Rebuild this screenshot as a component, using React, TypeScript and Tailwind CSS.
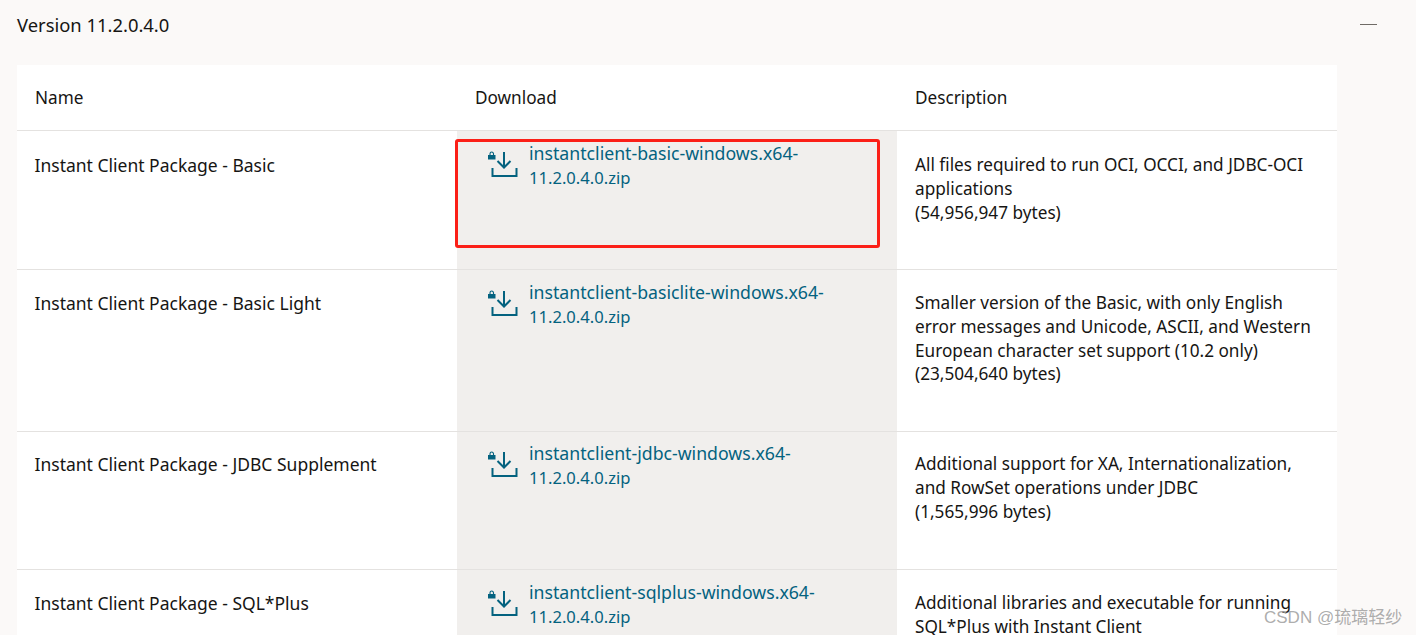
import React from 'react'

const rows = [
    {
        name: 'Instant Client Package - Basic',
        file: 'instantclient-basic-windows.x64-',
        height: 'h-[139px]',
        textPad: 'pt-[22px]',
        linkPad: 'pt-[11px]',
        desc: ['All files required to run OCI, OCCI, and JDBC-OCI', 'applications', '(54,956,947 bytes)'],
    },
    {
        name: 'Instant Client Package - Basic Light',
        file: 'instantclient-basiclite-windows.x64-',
        height: 'h-[162px]',
        textPad: 'pt-[21px]',
        linkPad: 'pt-[11px]',
        desc: ['Smaller version of the Basic, with only English', 'error messages and Unicode, ASCII, and Western', 'European character set support (10.2 only)', '(23,504,640 bytes)'],
    },
    {
        name: 'Instant Client Package - JDBC Supplement',
        file: 'instantclient-jdbc-windows.x64-',
        height: 'h-[138px]',
        textPad: 'pt-[20px]',
        linkPad: 'pt-[10px]',
        desc: ['Additional support for XA, Internationalization,', 'and RowSet operations under JDBC', '(1,565,996 bytes)'],
    },
    {
        name: 'Instant Client Package - SQL*Plus',
        file: 'instantclient-sqlplus-windows.x64-',
        height: 'h-[139px]',
        textPad: 'pt-[21px]',
        linkPad: 'pt-[11px]',
        desc: ['Additional libraries and executable for running', 'SQL*Plus with Instant Client'],
    },
]

const DownloadIcon = () => (
    <svg width="30" height="30" viewBox="0 0 30 30" fill="none" className="shrink-0">
        <path d="M0 6h7.5v4.5H0z" fill="#04627f" />
        <path d="M2 6V4.8a1.75 1.75 0 0 1 3.5 0V6" stroke="#04627f" strokeWidth="1.1" />
        <path d="M16 3v15M9.5 12l6.5 6.5 6.5-6.5" stroke="#04627f" strokeWidth="2" />
        <path d="M4.5 19v8h24v-8" stroke="#04627f" strokeWidth="2" />
    </svg>
)

const App = () => {
    return (
        <div className="relative h-[635px] w-[1416px] overflow-hidden bg-[#fbf9f8] text-[#161513] font-['Noto_Sans','Open_Sans',sans-serif] text-[17.2px] leading-[24px]">
            <div className="flex h-[65px] items-start justify-between pl-[17px] pr-[39px]">
                <h2 className="mt-[12px] text-[18.4px] leading-[26px]">Version 11.2.0.4.0</h2>
                <div className="mt-[24px] h-[1px] w-[17px] bg-[#6f6b66]"></div>
            </div>

            <div className="ml-[17px] w-[1320px] bg-white">
                <div className="grid h-[66px] grid-cols-[440px_440px_440px] border-b border-[#e4e2e0]">
                    <div className="pl-[18px] pt-[21px]">Name</div>
                    <div className="pl-[18px] pt-[21px]">Download</div>
                    <div className="pl-[18px] pt-[21px]">Description</div>
                </div>
                {rows.map((row) => (
                    <div key={row.name} className={`grid grid-cols-[440px_440px_440px] border-b border-[#e4e2e0] ${row.height}`}>
                        <div className={`pl-[17.5px] text-[17.5px] ${row.textPad}`}>{row.name}</div>
                        <div className={`flex gap-[11px] bg-[#f1efed] pl-[31px] text-[17.7px] ${row.linkPad}`}>
                            <div className="pt-[7px]"><DownloadIcon /></div>
                            <a className="text-[#04627f] leading-[23.5px]">
                                {row.file}
                                <br />
                                <span className="text-[16.6px]">11.2.0.4.0.zip</span>
                            </a>
                        </div>
                        <div className={`pl-[18px] leading-[23.8px] ${row.textPad}`}>
                            {row.desc.map((line) => (
                                <div key={line}>{line}</div>
                            ))}
                        </div>
                    </div>
                ))}
            </div>

            {/* annotation drawn over the screenshot */}
            <div className="absolute left-[455px] top-[139px] h-[109px] w-[425px] rounded-[3px] border-[3px] border-[#fb1f17]"></div>
            <div className="absolute left-[1264px] top-[607px] font-['Liberation_Sans','Noto_Sans_CJK_SC',sans-serif] text-[17px] leading-[22px] text-[#a3a3a3]/90">
                CSDN @琉璃轻纱
            </div>
        </div>
    )
}

export default App
